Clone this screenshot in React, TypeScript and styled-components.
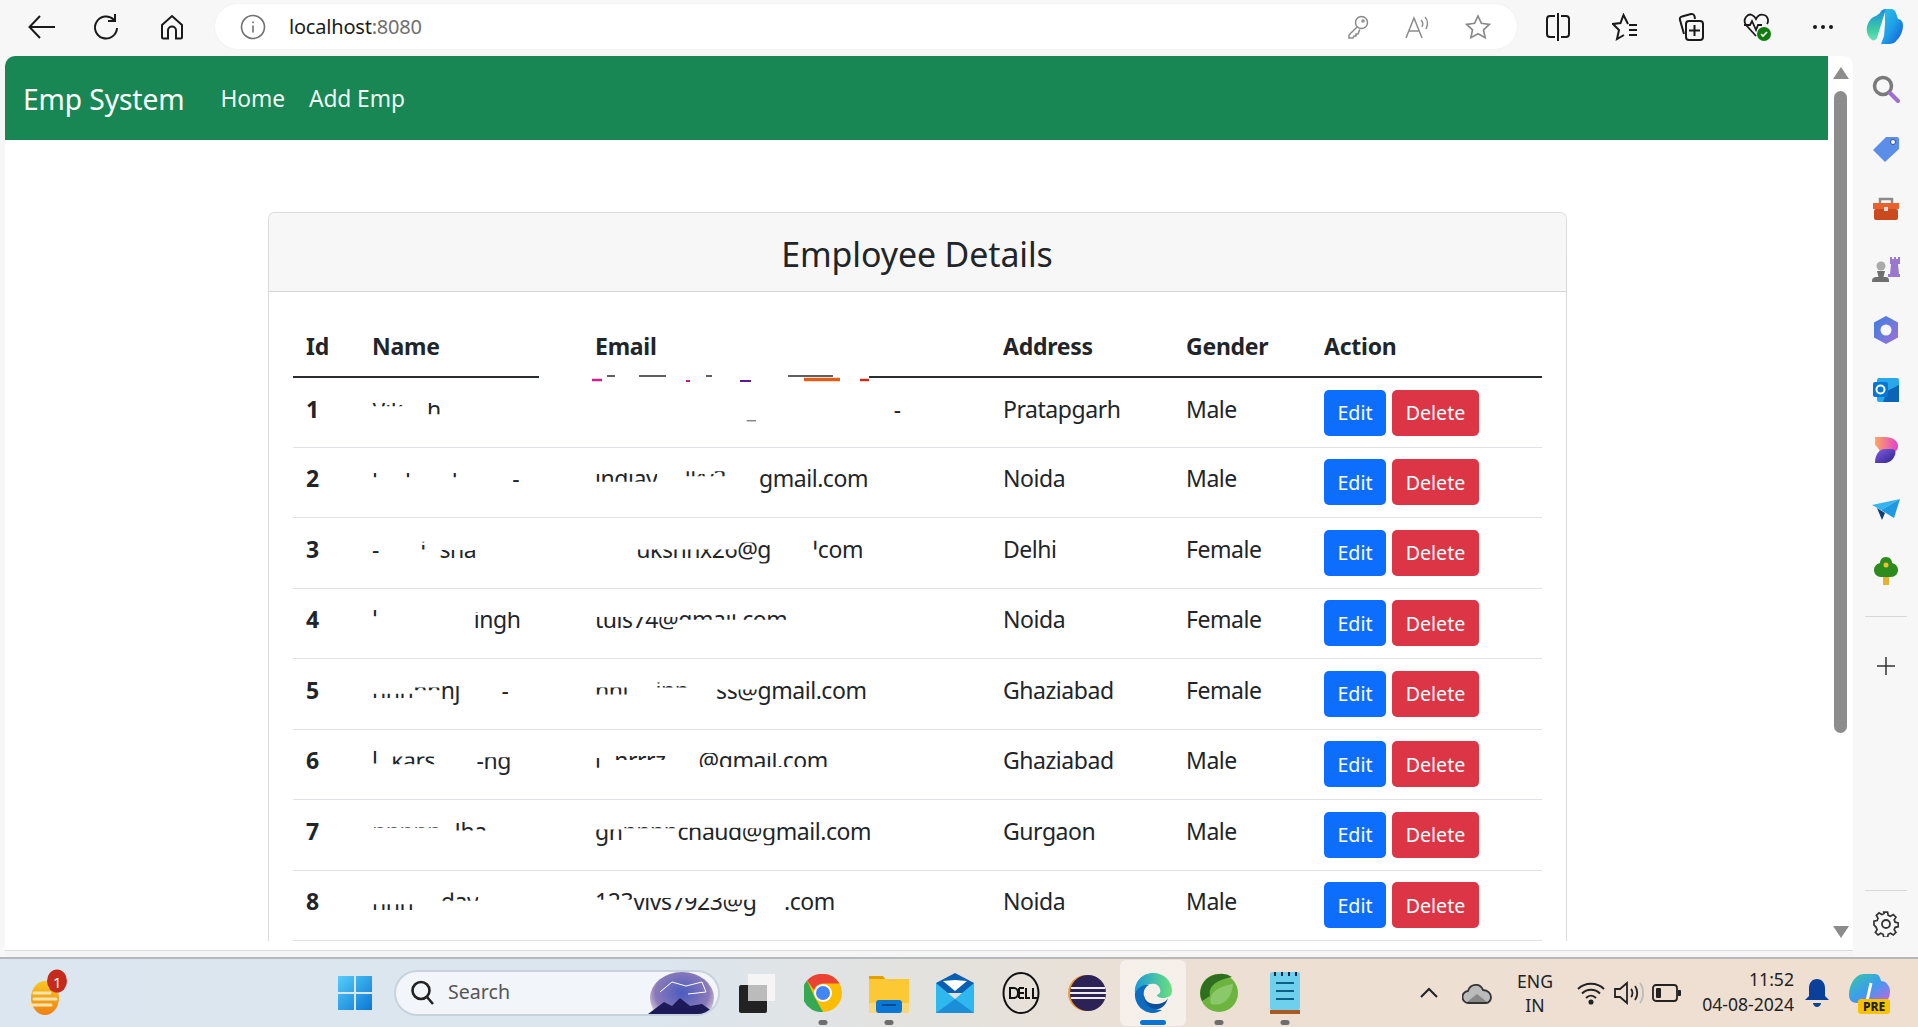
import React from "react";
import styled, { createGlobalStyle } from "styled-components";

const Global = createGlobalStyle`
  html, body { margin: 0; padding: 0; background: #f7f7f7; }
  * { box-sizing: border-box; }
  body { font-family: "Noto Sans", "Open Sans", "Liberation Sans", sans-serif; color: #212529; }
`;

const Screen = styled.div`
  width: 1918px; height: 1027px; overflow: hidden; display: flex; flex-direction: column; background: #f7f7f7;
`;
const Toolbar = styled.header`
  height: 56px; flex: none; display: flex; align-items: center; padding: 0 0 3px 10px;
`;
const ToolSlot = styled.div<{ $w?: number }>`
  width: ${p => p.$w ?? 66}px; height: 44px; flex: none; display: flex; align-items: center; justify-content: center;
`;
const UrlPill = styled.div`
  width: 1302px; height: 45px; margin: 0 7px 0 10px; background: #fff; border-radius: 23px; display: flex; align-items: center; flex: none;
  padding-left: 25px; box-shadow: 0 0 2px rgba(0,0,0,.06);
`;
const UrlText = styled.div`
  font-size: 20px; color: #1b1b1b; margin-left: 23px; flex: 1; letter-spacing: -0.2px;
  span { color: #6f6f6f; }
`;
const UrlIcon = styled.div`
  width: 58px; display: flex; justify-content: center; margin-right: 2px;
`;
const Middle = styled.div`
  flex: 1; display: flex; min-height: 0;
`;
const Viewport = styled.div`
  margin-left: 5px; width: 1848px; flex: none; display: flex; flex-direction: column; min-height: 0;
`;
const ViewportInner = styled.div`
  flex: 1; display: flex; min-height: 0; background: #fff; border-radius: 10px 10px 0 0; overflow: hidden;
  border-bottom: 1px solid #dcdcdc;
`;
const ViewportFoot = styled.div`
  height: 6px; flex: none; background: #f5f5f5;
`;
const Page = styled.main`
  flex: 1; min-width: 0; overflow: hidden; background: #fff;
`;
const Navbar = styled.nav`
  height: 84px; background: #198754; display: flex; align-items: center; padding-left: 18px; color: #fff;
`;
const Brand = styled.a`
  font-size: 28.2px; margin-right: 36px; letter-spacing: -0.1px; padding-top: 1px;
`;
const NavLink = styled.a`
  font-size: 22.8px; margin-right: 24px; letter-spacing: -0.1px; padding-top: 1px; color: rgba(255,255,255,.96);
`;
const Card = styled.section`
  margin: 72px 0 0 263px; width: 1299px; border: 1px solid rgba(0,0,0,.14); border-bottom: none; border-radius: 7px 7px 0 0; background: #fff;
`;
const CardHeader = styled.div`
  height: 79px; padding-top: 4px; background: #f7f7f7; border-bottom: 1px solid rgba(0,0,0,.14); display: flex; align-items: center; justify-content: center; border-radius: 7px 7px 0 0;
`;
const Title = styled.h2`
  margin: 0 1px 0 0; font-weight: 400; font-size: 33.9px; color: #212529; letter-spacing: -0.1px;
`;
const CardBody = styled.div`
  padding: 24px 24px 0; position: relative;
`;
const Table = styled.table`
  width: 1249px; table-layout: fixed; border-collapse: collapse; font-size: 23px; letter-spacing: -0.45px;
`;
const Th = styled.th`
  height: 61px; padding: 1px 13px 0; text-align: left; font-weight: 700; font-size: 23px; letter-spacing: -0.25px; vertical-align: middle; border-bottom: 2px solid #2a2d30; line-height: 35px;
`;
const Td = styled.td<{ $bold?: boolean }>`
  height: 70.45px; padding: 13.5px 13px 0; vertical-align: top; line-height: 35px; border-bottom: 1px solid #dee2e6; white-space: nowrap; font-weight: ${p => p.$bold ? 700 : 400}; color: #212529;
`;
const ActionTd = styled(Td)`
  padding-top: 11.5px;
`;
const Btn = styled.button<{ $bg: string; $w: number }>`
  width: ${p => p.$w}px; height: 46px; border: none; border-radius: 5px; background: ${p => p.$bg}; color: #fff; font-family: inherit; font-size: 19.6px; padding: 0; margin-right: 6px; vertical-align: top;
`;
const Frag = styled.span<{ $t?: number; $b?: number }>`
  display: inline-block; clip-path: inset(${p => p.$t ?? 0}% 0 ${p => p.$b ?? 0}% 0);
`;
const Mark = styled.svg`
  position: absolute; left: 270px; top: 82px;
`;
const Scrollbar = styled.aside`
  width: 25px; flex: none; display: flex; flex-direction: column; align-items: center; background: #fff; padding-top: 11px;
`;
const Thumb = styled.div`
  width: 13px; height: 642px; margin-top: 12px; background: #8c8c8c; border-radius: 7px;
`;
const ArrowDown = styled.div`
  margin-top: auto; margin-bottom: 12px; line-height: 0;
`;
const Side = styled.aside`
  width: 65px; flex: none; display: flex; flex-direction: column; align-items: center; padding-top: 3px;
`;
const SideSlot = styled.div<{ $h?: number }>`
  height: ${p => p.$h ?? 60.2}px; display: flex; align-items: center; justify-content: center; flex: none;
`;
const SideRule = styled.div<{ $auto?: boolean }>`
  width: 42px; height: 1px; background: #d8d8d8; flex: none; margin-top: ${p => p.$auto ? "auto" : "15px"};
`;
const Taskbar = styled.footer`
  height: 70px; flex: none; display: flex; align-items: center; border-top: 2px solid #b5b9bb;
  background: linear-gradient(90deg, #dbe6f0 0%, #dce6ef 34%, #e3e2de 48%, #ecdfd3 62%, #efdfd1 100%);
`;
const Weather = styled.div`
  width: 322px; padding-left: 26px; flex: none; line-height: 0;
`;
const TaskSlot = styled.div<{ $active?: boolean }>`
  width: 66px; height: 66px; flex: none; display: flex; flex-direction: column; align-items: center; justify-content: center; position: relative; border-radius: 6px;
  background: ${p => p.$active ? "rgba(255,255,255,.5)" : "transparent"};
`;
const Pip = styled.i<{ $active?: boolean }>`
  position: absolute; bottom: 1px; left: 50%; transform: translateX(-50%); height: 5px; border-radius: 3px;
  width: ${p => p.$active ? 26 : 9}px; background: ${p => p.$active ? "#0a74d0" : "#6d6d6d"};
`;
const Search = styled.div`
  width: 326px; height: 46px; margin: 0 4px 0 6px; flex: none; border-radius: 23px; background: #f2f6fa; border: 2px solid #c8d2dc; display: flex; align-items: center; padding-left: 14px; overflow: hidden;
`;
const SearchLabel = styled.span`
  font-size: 19.6px; color: #555; margin-left: 12px; padding-bottom: 3px; flex: 1;
`;
const Tray = styled.div`
  margin-left: auto; display: flex; align-items: center; height: 100%;
`;
const TraySlot = styled.div<{ $w: number }>`
  width: ${p => p.$w}px; flex: none; display: flex; justify-content: center; align-items: center; line-height: 0;
`;
const Lang = styled.div`
  width: 68px; text-align: center; font-size: 17.6px; line-height: 24px; color: #222;
`;
const Clock = styled.div`
  width: 105px; text-align: right; font-size: 17.6px; line-height: 25px; padding-bottom: 2px; color: #222;
`;

const Back = () => <svg width="30" height="26" viewBox="0 0 30 26" fill="none" stroke="#1a1a1a" strokeWidth="2"><path d="M28 13H3M13 2 2.5 13 13 24" /></svg>;
const Reload = () => <svg width="28" height="28" viewBox="0 0 28 28" fill="none" stroke="#1a1a1a" strokeWidth="2"><path d="M22 7A11 11 0 1 0 25 15" /><path d="M23 1v7h-7" /></svg>;
const HomeI = () => <svg width="24" height="26" viewBox="0 0 24 26" fill="none" stroke="#1a1a1a" strokeWidth="2"><path d="M2 11 12 2l10 9v12a1.5 1.5 0 0 1-1.5 1.5H16v-8a4 4 0 0 0-8 0v8H3.500A1.500 1.500 0 0 1 2 23z" /></svg>;
const InfoI = () => <svg width="26" height="26" viewBox="0 0 26 26" fill="none" stroke="#707070" strokeWidth="1.600"><circle cx="13" cy="13" r="11.500" /><path d="M13 11.500v7M13 7.500v1.800" /></svg>;
const KeyI = () => <svg width="22" height="24" viewBox="0 0 22 24" fill="none" stroke="#8a8a8a" strokeWidth="1.500"><circle cx="14.500" cy="7.500" r="6" /><path d="M10 12 2 20v3h4l1-2h2v-2h2l1.800-4.500" /><circle cx="16" cy="6" r="1" /></svg>;
const ReadI = () => <svg width="26" height="24" viewBox="0 0 26 24" fill="none" stroke="#8a8a8a" strokeWidth="1.500"><path d="M1 23 9 3l8 20M4 16h10M16 5c2 2 2 5 1 7M20 2c3 3 3 8 1 12" /></svg>;
const StarI = () => <svg width="26" height="26" viewBox="0 0 26 26" fill="none" stroke="#8a8a8a" strokeWidth="1.700"><path d="m13 2 3.400 7.300 8 1-5.900 5.500 1.600 7.900-7.100-4-7.100 4 1.600-7.900L1.600 10.300l8-1z" /></svg>;
const SplitI = () => <svg width="24" height="30" viewBox="0 0 24 30" fill="none" stroke="#1a1a1a" strokeWidth="2"><path d="M9 4H4a3 3 0 0 0-3 3v15a3 3 0 0 0 3 3h5M15 4h5a3 3 0 0 1 3 3v15a3 3 0 0 1-3 3h-5M12 1v28" /></svg>;
const FavI = () => <svg width="26" height="28" viewBox="0 0 26 28" fill="none" stroke="#1a1a1a" strokeWidth="2"><path d="M16 11 11.500 2 8.500 10 1 11l6 6-2 9 7-4M17 12h8M17 17h8M17 22h8" /></svg>;
const CollI = () => <svg width="26" height="30" viewBox="0 0 26 30" fill="none" stroke="#1a1a1a" strokeWidth="2"><path d="M6 22 2 8c-.5-1.500 0-3 2-3.500L13 2c2-.4 3 .5 3.500 2l.5 3" /><rect x="8" y="9" width="17" height="19" rx="3" /><path d="M16.500 13v11M11 18.500h11" /></svg>;
const HealthI = () => <svg width="30" height="30" viewBox="0 0 30 30" fill="none"><path d="M13 24 3 13C-1 7 5 1 9 3c2 1 3 2 4 4 2-4 5-5 8-4 4 1 5 6 3 9M1 13h6l2-4 4 9 2-5h4" stroke="#1a1a1a" strokeWidth="1.800" /><circle cx="21" cy="22" r="7" fill="#107c10" /><path d="m18 22 2 2 4-4" stroke="#fff" strokeWidth="1.600" /></svg>;
const Dots = () => <svg width="22" height="6" viewBox="0 0 22 6" fill="#1a1a1a"><circle cx="3" cy="3" r="2" /><circle cx="11" cy="3" r="2" /><circle cx="19" cy="3" r="2" /></svg>;
const CopilotTop = () => <svg width="38" height="38" viewBox="0 0 38 38"><defs><linearGradient id="ct" x1="0" y1="0" x2="1" y2="1"><stop offset="0" stopColor="#2ec4e0" /><stop offset=".5" stopColor="#1fa0e8" /><stop offset="1" stopColor="#1556d8" /></linearGradient><linearGradient id="ct2" x1="0" y1="0" x2="0" y2="1"><stop offset="0" stopColor="#1a8ce0" /><stop offset=".7" stopColor="#40d0a0" /><stop offset="1" stopColor="#70e0c0" /></linearGradient></defs><path d="M19 1h6c3 0 4 2 5 4l2 6c3 0 5 3 5 6 0 5-2 11-6 15-2 3-5 4-8 4h-8l3-8 1-12z" fill="url(#ct)" /><path d="M14 5c1-3 3-4 6-4l-6 19-3 10c-1 2-3 3-5 2-4-3-6-8-5-13 1-6 5-10 9-11z" fill="url(#ct2)" /></svg>;

const SideSearch = () => <svg width="30" height="30" viewBox="0 0 30 30" fill="none"><circle cx="12" cy="12" r="8.500" stroke="#7a7a7a" strokeWidth="3.500" /><path d="m19 19 8 8" stroke="#9b6ed0" strokeWidth="4" strokeLinecap="round" /></svg>;
const Tag = () => <svg width="28" height="28" viewBox="0 0 28 28"><path d="M14 2h11a2 2 0 0 1 2 2v10L13 27 1 15z" fill="#5b8ee8" /><circle cx="21" cy="7" r="2.500" fill="#fff" stroke="#2c4fa0" /></svg>;
const Toolbox = () => <svg width="28" height="26" viewBox="0 0 28 26"><path d="M8 8V3h12v5" fill="none" stroke="#8a8a8a" strokeWidth="2.500" /><rect x="1" y="7" width="26" height="6" fill="#e8622c" /><rect x="2" y="13" width="24" height="11" rx="2" fill="#c94a1f" /><rect x="12" y="11" width="4" height="4" fill="#ddd" /></svg>;
const Chess = () => <svg width="28" height="28" viewBox="0 0 28 28"><path d="M18 1h2v2h2V1h2v2h2V1h2v7h-2l1 10h2v3H16v-3h2l1-10h-1z" fill="#9a78d0" /><circle cx="9" cy="10" r="4.500" fill="#aaa" /><path d="M5 15h8l-1.500 6H14c2 0 3 1 3 4v1H0v-1c0-3 2-4 4-4h2.500z" fill="#707070" /></svg>;
const M365 = () => <svg width="26" height="28" viewBox="0 0 26 28"><defs><linearGradient id="m3" x1="0" y1="0" x2="1" y2="1"><stop offset="0" stopColor="#3a7fe0" /><stop offset="1" stopColor="#a070d8" /></linearGradient></defs><path d="M13 0 25 6.500v15L13 28 1 21.500v-15z" fill="url(#m3)" /><circle cx="13" cy="14" r="5.500" fill="#f7f7f7" /></svg>;
const Outlook = () => <svg width="26" height="26" viewBox="0 0 26 26"><rect x="4" y="1" width="22" height="24" rx="2" fill="#28a8ea" /><path d="M14 14 26 8v17H10z" fill="#0a64b8" /><rect y="5" width="15" height="15" rx="2" fill="#0078d4" /><circle cx="7.500" cy="12.500" r="4" fill="none" stroke="#fff" strokeWidth="2" /></svg>;
const Designer = () => <svg width="24" height="26" viewBox="0 0 24 26"><defs><linearGradient id="d1" x1="0" y1="0" x2="1" y2="0"><stop offset="0" stopColor="#ffa860" /><stop offset="1" stopColor="#e040d0" /></linearGradient><linearGradient id="d2" x1="0" y1="0" x2="1" y2="1"><stop offset="0" stopColor="#8060e0" /><stop offset="1" stopColor="#302090" /></linearGradient></defs><path d="M1 0h10c8 0 13 4 13 9s-4 7-9 7H9C6 16 5 11 1 8z" fill="url(#d1)" /><path d="M1 26c0-8 4-14 10-14h7c3 0 5 3 2 8-2 4-6 6-10 6z" fill="url(#d2)" /></svg>;
const Send = () => <svg width="28" height="22" viewBox="0 0 28 22"><path d="M0 6 28 0 9 11z" fill="#35b4ee" /><path d="M28 0 9 11 22 19z" fill="#1f9ae0" /><path d="m5 9 5 12 3-7z" fill="#123f7a" /></svg>;
const Tree = () => <svg width="24" height="28" viewBox="0 0 24 28"><rect x="9" y="18" width="6" height="10" fill="#e8b030" /><path d="M12 0c4 0 6 3 6 6 4 1 6 4 6 7 0 4-3 7-7 7H7c-4 0-7-3-7-7 0-3 2-6 6-7 0-3 2-6 6-6z" fill="#2e8b1e" /><circle cx="12" cy="8" r="2.500" fill="#f0c030" /></svg>;
const Plus = () => <svg width="20" height="20" viewBox="0 0 20 20" stroke="#333" strokeWidth="1.500"><path d="M10 1v18M1 10h18" /></svg>;
const Gear = () => <svg width="26" height="26" viewBox="0 0 26 26" fill="none" stroke="#333" strokeWidth="1.800"><path d="M11 1.500h4l.7 3.300 2.400 1 2.900-1.800 2.800 2.800-1.800 2.900 1 2.400 3.300.7v4l-3.300.7-1 2.400 1.800 2.900-2.800 2.800-2.900-1.800-2.400 1-.7 3.300h-4l-.7-3.300-2.400-1-2.900 1.800-2.800-2.800 1.800-2.900-1-2.400L.7 15v-4l3.300-.7 1-2.400L3.200 5l2.800-2.800 2.900 1.800 2.400-1z" transform="translate(.300 -.300) scale(.95)" /><circle cx="13" cy="13" r="4" /></svg>;

const WeatherI = () => <svg width="44" height="48" viewBox="0 0 44 48"><defs><linearGradient id="w" x1="0" y1="0" x2="0" y2="1"><stop offset="0" stopColor="#f8c820" /><stop offset="1" stopColor="#f08010" /></linearGradient></defs><ellipse cx="19" cy="29" rx="14" ry="17" fill="url(#w)" /><path d="M8 24h16M8 30h22M3 36h22" stroke="#f5e4b0" strokeWidth="3" strokeLinecap="round" /><ellipse cx="31" cy="12" rx="10" ry="11.500" fill="#c42b1c" /></svg>;
const WeatherBadge = styled.span`
  position: absolute; left: 27px; top: 3px; font-size: 15px; color: #fff; line-height: 20px;
`;
const WeatherWrap = styled.div`
  position: relative; display: inline-block;
`;
const WinLogo = () => <svg width="36" height="36" viewBox="0 0 36 36"><defs><linearGradient id="wl" x1="0" y1="0" x2="1" y2="1"><stop offset="0" stopColor="#55cdfa" /><stop offset="1" stopColor="#0a78d4" /></linearGradient></defs><path d="M1 1h16v16H1zM19 1h16v16H19zM1 19h16v16H1zM19 19h16v16H19z" fill="url(#wl)" /></svg>;
const SearchI = () => <svg width="26" height="28" viewBox="0 0 26 28" fill="none" stroke="#222" strokeWidth="2.600"><circle cx="11" cy="11.500" r="8.500" /><path d="m17 18 6 7" /></svg>;
const Constellation = () => <svg width="74" height="42" viewBox="0 0 74 42"><defs><radialGradient id="cn" cx=".5" cy=".4" r=".6"><stop offset="0" stopColor="#4a5cc0" /><stop offset=".7" stopColor="#8a7ab8" /><stop offset="1" stopColor="#e8d8e0" /></radialGradient></defs><ellipse cx="38" cy="26" rx="32" ry="26" fill="url(#cn)" /><path d="M4 42 20 30l8 4 8-8 10 8 12-2 14 10z" fill="#1c1a58" /><path d="m16 20 12-10 14 4 16-4 4 10-18 2" stroke="#fff" strokeWidth="1" fill="none" /></svg>;
const TaskView = () => <svg width="38" height="40" viewBox="0 0 38 40"><rect x="1" y="12" width="28" height="28" rx="2" fill="#222" /><rect x="10" y="1" width="27" height="27" fill="#f5f5f5" /><rect x="10" y="12" width="19" height="16" fill="#bbb" /></svg>;
const Chrome = () => <svg width="38" height="38" viewBox="0 0 38 38"><circle cx="19" cy="19" r="19" fill="#fbbc04" /><path d="M19 0a19 19 0 0 1 16.500 9.500H19a9.500 9.500 0 0 0-9 6.500L3 6.500A19 19 0 0 1 19 0z" fill="#ea4335" /><path d="M3 6.500 10.500 23 19 38A19 19 0 0 1 3 6.500z" fill="#34a853" /><circle cx="19" cy="19" r="9" fill="#fff" /><circle cx="19" cy="19" r="7" fill="#4285f4" /></svg>;
const Folder = () => <svg width="40" height="40" viewBox="0 0 40 40"><path d="M0 3h14l3 4H0z" fill="#dfa000" /><rect y="6" width="40" height="34" fill="#fcc935" /><rect y="30" width="40" height="10" fill="#f8d878" /><rect x="7" y="27" width="26" height="13" rx="3" fill="#0a78d4" /><rect x="13" y="31" width="14" height="2" fill="#054a8a" /></svg>;
const Mail = () => <svg width="38" height="40" viewBox="0 0 38 40"><path d="M0 10 19 0l19 10v10H0z" fill="#0a5fb0" /><path d="m7 8 12-1 12 1-12 10z" fill="#fff" /><path d="M0 10 19 26 38 10v30H0z" fill="#2fb8f0" /><path d="M0 40 19 26l19 14z" fill="#1a8fd8" /></svg>;
const Dell = () => <svg width="38" height="42" viewBox="0 0 38 42"><ellipse cx="19" cy="21" rx="17.500" ry="20" fill="none" stroke="#111" strokeWidth="2" /><path d="M8 16v10h4c2 0 4-2 4-5s-2-5-4-5zM17 16h5M17 21h5M17 26h5M17 16v10M24 16v10h4M31 16v10h4" fill="none" stroke="#111" strokeWidth="2" /></svg>;
const Eclipse = () => <svg width="38" height="38" viewBox="0 0 38 38"><circle cx="18" cy="19" r="18" fill="#f09a30" /><circle cx="20" cy="19" r="18" fill="#2c2255" /><path d="M3 14h34M2 19h36M3 24h34" stroke="#eee" strokeWidth="2.200" /></svg>;
const Edge = () => <svg width="38" height="40" viewBox="0 0 38 40"><defs><linearGradient id="eg" x1="0" y1="0" x2="1" y2="0"><stop offset="0" stopColor="#1a9adc" /><stop offset="1" stopColor="#6ae07c" /></linearGradient></defs><path d="M19 0c11 0 19 8 19 18 0 5-4 7-9 7-3 0-6-1-6-3 3-1 4-3 3-6-1-4-5-6-9-5C9 12 4 15 1 20 0 9 8 0 19 0z" fill="url(#eg)" /><path d="M1 20c3-6 9-9 14-8-4 2-6 6-5 11 1 8 9 14 18 14-3 2-6 3-9 3C9 40 0 31 1 20z" fill="#0d6cc0" /><path d="M10 22c0 5 5 9 11 9 6 0 11-2 13-6-2 8-8 12-13 11-6-1-12-7-11-14z" fill="#0a4f98" /></svg>;
const Spring = () => <svg width="38" height="42" viewBox="0 0 38 42"><circle cx="19" cy="21" r="19" fill="#6cb33f" /><path d="M19 2a19 19 0 0 0-17 27l8-5c-2-8 4-16 22-19A19 19 0 0 0 19 2z" fill="#2f6e1f" /><path d="M11 32c-3-10 5-17 22-20-1 14-9 23-22 20z" fill="#8bc86a" /></svg>;
const Notes = () => <svg width="30" height="44" viewBox="0 0 30 44"><rect width="30" height="38" y="1" rx="2" fill="#6ed0ec" /><path d="M6 12h18M6 20h18M6 28h18" stroke="#0c5f86" strokeWidth="2" /><path d="M5 1v4M12 1v4M19 1v4M26 1v4" stroke="#124" strokeWidth="2" /><rect y="39" width="30" height="4" fill="#a85a22" /></svg>;

const Chevron = () => <svg width="20" height="12" viewBox="0 0 20 12" fill="none" stroke="#222" strokeWidth="2"><path d="m2 10 8-8 8 8" /></svg>;
const Cloud = () => <svg width="30" height="22" viewBox="0 0 30 22"><path d="M7 21a6 6 0 0 1-1-12C8 2 18 0 21 8c5 0 8 4 8 7s-2 6-5 6z" fill="#bbb" stroke="#333" strokeWidth="1.800" /><path d="M5 20 15 12l10 8z" fill="#888" /></svg>;
const Wifi = () => <svg width="30" height="24" viewBox="0 0 30 24" fill="none" stroke="#222" strokeWidth="1.900"><path d="M2 8c7-7 19-7 26 0M6 12.500c5-5 13-5 18 0M10 17c3-3 7-3 10 0" /><circle cx="15" cy="21" r="1.600" fill="#222" /></svg>;
const Speaker = () => <svg width="30" height="24" viewBox="0 0 30 24" fill="none" stroke="#222" strokeWidth="1.800"><path d="M1 8h5l7-6v20l-7-6H1zM17 8c2 2 2 6 0 8M21 5c3 4 3 10 0 14" /><path d="M26 2c4 5 4 15 0 20" stroke="#bbb" /></svg>;
const Battery = () => <svg width="30" height="18" viewBox="0 0 30 18" fill="none"><rect x="1" y="1" width="24" height="16" rx="3" stroke="#222" strokeWidth="1.800" /><rect x="4" y="4" width="5" height="10" rx="1" fill="#222" /><path d="M26 6h2a1 1 0 0 1 1 1v4a1 1 0 0 1-1 1h-2z" fill="#222" /></svg>;
const Bell = () => <svg width="26" height="30" viewBox="0 0 26 30"><path d="M13 1c5 0 8 4 8 9v8l4 4H1l4-4v-8c0-5 3-9 8-9z" fill="#0a3f9a" /><path d="M9 25h8c0 2-2 4-4 4s-4-2-4-4z" fill="#0a3f9a" /></svg>;
const CopilotPre = () => <svg width="42" height="42" viewBox="0 0 42 42"><defs><linearGradient id="cp" x1="0" y1="0" x2="1" y2="1"><stop offset="0" stopColor="#38c8a0" /><stop offset=".5" stopColor="#3c9cf0" /><stop offset="1" stopColor="#d060e0" /></linearGradient></defs><path d="M14 2h12c4 0 5 3 6 7 5 0 9 5 9 10 0 8-4 12-8 12H8c-5 0-8-3-8-8C0 14 5 3 14 2z" fill="url(#cp)" /><path d="M22 11l-4 18" stroke="#fff" strokeWidth="3" /><rect x="9" y="27" width="32" height="15" rx="3" fill="#f8c200" /><text x="25" y="39" fontSize="12" fontWeight="800" textAnchor="middle" fill="#222" fontFamily="Noto Sans">PRE</text></svg>;

type Seg = [string, number?, number?];

interface Row {
  id: number; name: Seg[]; email: Seg[]; address: string; gender: string;
}

const H = 100;
const rows: Row[] = [
  { id: 1, name: [["Vik", 33, 58], ["ak", H, 0], ["h", 33, 35]], email: [["nnnnnnnnnnn", H, 0], ["_", 55, 15], ["nnnnnnnnnn", H, 0], ["-", 40, 30]], address: "Pratapgarh", gender: "Male" },
  { id: 2, name: [["l", 33, 55], ["nn", H, 0], ["l", 33, 55], ["nnn", H, 0], ["l", 33, 55], ["nnnn", H, 0], ["-", 45, 30]], email: [["indiay", 33, 42], ["nn", H, 0], ["lkv2", 28, 58], ["nni", H, 0], ["gmail.com"]], address: "Noida", gender: "Male" },
  { id: 3, name: [["-", 30, 35], ["nnn", H, 0], ["i", 28, 50], ["n", H, 0], ["sha", 52, 25]], email: [["nnn", H, 0], ["ukshnx26", 50, 22], ["@g", 30, 10], ["nnn", H, 0], ["l", 25, 50], ["com"]], address: "Delhi", gender: "Female" },
  { id: 4, name: [["l", 22, 60], ["nnnnnnn", H, 0], ["ingh", 28, 8]], email: [["tuls74@", 42, 22], ["gmail.com", 34, 50]], address: "Noida", gender: "Female" },
  { id: 5, name: [["nnn", 60, 28], ["nn", 42, 50], ["nj", 34, 8], ["nnn", H, 0], ["-", 45, 25]], email: [["nni", 42, 38], ["nn", H, 0], ["inn", 28, 58], ["nn", H, 0], ["ss@", 48, 12], ["gmail.com"]], address: "Ghaziabad", gender: "Female" },
  { id: 6, name: [["l", 22, 42], ["n", H, 0], ["kars", 38, 40], ["nnn", H, 0], ["-ng", 40, 5]], email: [["l", 42, 30], ["n", H, 0], ["nrrrz", 32, 52], ["nni", H, 0], ["@gmail.com", 28, 32]], address: "Ghaziabad", gender: "Male" },
  { id: 7, name: [["nnnnn", 32, 60], ["n", H, 0], ["Jha", 24, 52]], email: [["gn", 45, 0], ["nnnn", 32, 58], ["chaud", 40, 18], ["@g", 42, 10], ["mail.com"]], address: "Gurgaon", gender: "Male" },
  { id: 8, name: [["nnn", 58, 12], ["nn", H, 0], ["dav", 24, 52]], email: [["123", 22, 55], ["vivs7923", 40, 25], ["@g", 45, 0], ["nn", H, 0], [".com"]], address: "Noida", gender: "Male" },
];

const Cell = ({ segs }: { segs: Seg[] }) => (
  <>{segs.map((s, i) => <Frag key={i} $t={s[1]} $b={s[2]}>{s[0]}</Frag>)}</>
);

const SIDE_ICONS = [SideSearch, Tag, Toolbox, Chess, M365, Outlook, Designer, Send, Tree];

export default function App() {
  return (
    <Screen>
      <Global />
      <Toolbar>
        <ToolSlot $w={63}><Back /></ToolSlot>
        <ToolSlot><Reload /></ToolSlot>
        <ToolSlot $w={66}><HomeI /></ToolSlot>
        <UrlPill>
          <InfoI />
          <UrlText>localhost<span>:8080</span></UrlText>
          <UrlIcon><KeyI /></UrlIcon>
          <UrlIcon><ReadI /></UrlIcon>
          <UrlIcon><StarI /></UrlIcon>
          <ToolSlot $w={8} />
        </UrlPill>
        <ToolSlot $w={68}><SplitI /></ToolSlot>
        <ToolSlot><FavI /></ToolSlot>
        <ToolSlot><CollI /></ToolSlot>
        <ToolSlot $w={68}><HealthI /></ToolSlot>
        <ToolSlot $w={62}><Dots /></ToolSlot>
        <ToolSlot $w={62}><CopilotTop /></ToolSlot>
      </Toolbar>
      <Middle>
        <Viewport>
          <ViewportInner>
            <Page>
              <Navbar>
                <Brand>Emp System</Brand>
                <NavLink>Home</NavLink>
                <NavLink>Add Emp</NavLink>
              </Navbar>
              <Card>
                <CardHeader><Title>Employee Details</Title></CardHeader>
                <CardBody>
                  <Table>
                    <colgroup>
                      <col width="66" /><col width="223" /><col width="408" /><col width="183" /><col width="138" /><col width="231" />
                    </colgroup>
                    <thead>
                      <tr>
                        <Th>Id</Th><Th>Name</Th><Th>Email</Th><Th>Address</Th><Th>Gender</Th><Th>Action</Th>
                      </tr>
                    </thead>
                    <tbody>
                      {rows.map(r => (
                        <tr key={r.id}>
                          <Td $bold>{r.id}</Td>
                          <Td><Cell segs={r.name} /></Td>
                          <Td><Cell segs={r.email} /></Td>
                          <Td>{r.address}</Td>
                          <Td>{r.gender}</Td>
                          <ActionTd>
                            <Btn $bg="#0d6efd" $w={62}>Edit</Btn>
                            <Btn $bg="#dc3545" $w={87}>Delete</Btn>
                          </ActionTd>
                        </tr>
                      ))}
                    </tbody>
                  </Table>
                  <Mark width="330" height="10" viewBox="0 0 330 10">
                    <rect width="330" height="10" fill="#fff" />
                    <path d="M68 2h8M100 2h27M167 2h6M249 2h45" stroke="#2a2d30" strokeWidth="1.500" />
                    <path d="M53 6h10" stroke="#d81b8c" strokeWidth="2.500" />
                    <path d="M147 7h4" stroke="#c2188a" strokeWidth="2" />
                    <path d="M201 7h11" stroke="#5a1a90" strokeWidth="2" />
                    <path d="M265 5.500h36" stroke="#e0601a" strokeWidth="3.500" />
                    <path d="M321 6h9" stroke="#c8301a" strokeWidth="2.500" />
                  </Mark>
                </CardBody>
              </Card>
            </Page>
            <Scrollbar>
              <svg width="16" height="12" viewBox="0 0 16 12" fill="#8c8c8c"><path d="M8 0l8 12H0z" /></svg>
              <Thumb />
              <ArrowDown><svg width="16" height="12" viewBox="0 0 16 12" fill="#8c8c8c"><path d="M0 0h16L8 12z" /></svg></ArrowDown>
            </Scrollbar>
          </ViewportInner>
          <ViewportFoot />
        </Viewport>
        <Side>
          {SIDE_ICONS.map((I, k) => <SideSlot key={k}><I /></SideSlot>)}
          <SideRule />
          <SideSlot $h={98}><Plus /></SideSlot>
          <SideRule $auto />
          <SideSlot $h={66}><Gear /></SideSlot>
        </Side>
      </Middle>
      <Taskbar>
        <Weather>
          <WeatherWrap><WeatherI /><WeatherBadge>1</WeatherBadge></WeatherWrap>
        </Weather>
        <TaskSlot><WinLogo /></TaskSlot>
        <Search>
          <SearchI />
          <SearchLabel>Search</SearchLabel>
          <Constellation />
        </Search>
        <TaskSlot><TaskView /></TaskSlot>
        <TaskSlot><Chrome /><Pip /></TaskSlot>
        <TaskSlot><Folder /><Pip /></TaskSlot>
        <TaskSlot><Mail /></TaskSlot>
        <TaskSlot><Dell /></TaskSlot>
        <TaskSlot><Eclipse /></TaskSlot>
        <TaskSlot $active><Edge /><Pip $active /></TaskSlot>
        <TaskSlot><Spring /><Pip /></TaskSlot>
        <TaskSlot><Notes /><Pip /></TaskSlot>
        <Tray>
          <TraySlot $w={48}><Chevron /></TraySlot>
          <TraySlot $w={48}><Cloud /></TraySlot>
          <Lang>ENG<br />IN</Lang>
          <TraySlot $w={44}><Wifi /></TraySlot>
          <TraySlot $w={32}><Speaker /></TraySlot>
          <TraySlot $w={44}><Battery /></TraySlot>
          <Clock>11:52<br />04-08-2024</Clock>
          <TraySlot $w={46}><Bell /></TraySlot>
          <TraySlot $w={60}><CopilotPre /></TraySlot>
          <TraySlot $w={18} />
        </Tray>
      </Taskbar>
    </Screen>
  );
}
